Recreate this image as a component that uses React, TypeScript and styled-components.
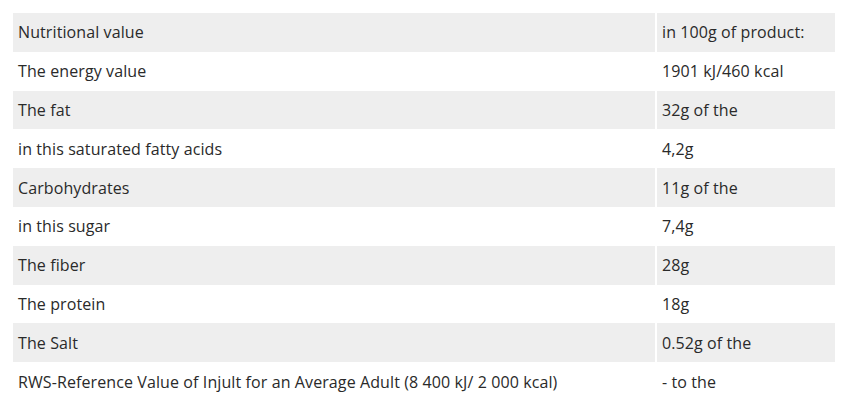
import React from "react";
import styled, { createGlobalStyle } from "styled-components";

const GlobalStyle = createGlobalStyle`
  body {
    margin: 0;
    background: #fff;
    font-family: "Open Sans", "Noto Sans", sans-serif;
  }
`;

const Table = styled.div`
  margin: 13px 10px 0 13px;
  width: 822px;
  display: grid;
  grid-template-columns: 642px 178px;
  column-gap: 2px;
`;

const Cell = styled.div<{ $shaded: boolean }>`
  height: 38.8px;
  display: flex;
  align-items: center;
  padding: 0 5px;
  background: ${(p) => (p.$shaded ? "#eeeeee" : "#ffffff")};
  color: #2a2a2a;
  font-size: 16px;
  letter-spacing: 0.1px;
  white-space: nowrap;
`;

const rows: [string, string][] = [
  ["Nutritional value", "in 100g of product:"],
  ["The energy value", "1901 kJ/460 kcal"],
  ["The fat", "32g of the"],
  ["in this saturated fatty acids", "4,2g"],
  ["Carbohydrates", "11g of the"],
  ["in this sugar", "7,4g"],
  ["The fiber", "28g"],
  ["The protein", "18g"],
  ["The Salt", "0.52g of the"],
  ["RWS-Reference Value of Injult for an Average Adult (8 400 kJ/ 2 000 kcal)", "- to the"],
];

export default function App() {
  return (
    <>
      <GlobalStyle />
      <Table>
        {rows.map(([name, value], i) => (
          <React.Fragment key={name}>
            <Cell $shaded={i % 2 === 0}>{name}</Cell>
            <Cell $shaded={i % 2 === 0}>{value}</Cell>
          </React.Fragment>
        ))}
      </Table>
    </>
  );
}
